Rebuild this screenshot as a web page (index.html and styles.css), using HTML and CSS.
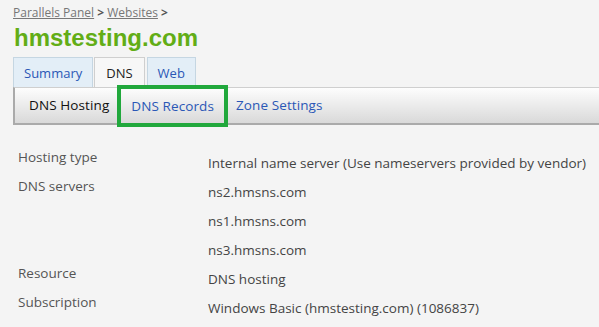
FILE: index.html
```html
<!DOCTYPE html>
<html>
<head>
    <meta charset="utf-8" />
    <title>hmstesting.com</title>
    <link rel="stylesheet" href="styles.css">
</head>
<body>
    <div class="crumbs">
        <a href="#">Parallels Panel</a> <b>&gt;</b> <a href="#">Websites</a> <b>&gt;</b>
    </div>
    <h1 class="title">hmstesting.com</h1>
    <div class="tabs">
        <a class="tab" href="#">Summary</a>
        <a class="tab active" href="#">DNS</a>
        <a class="tab" href="#">Web</a>
    </div>
    <div class="subnav">
        <a class="sub current" href="#">DNS Hosting</a>
        <a class="sub marked" href="#">DNS Records</a>
        <a class="sub" href="#">Zone Settings</a>
    </div>
    <div class="info">
        <div class="lab">Hosting type</div>
        <div class="val">Internal name server (Use nameservers provided by vendor)</div>
        <div class="lab">DNS servers</div>
        <div class="val">ns2.hmsns.com</div>
        <div class="lab"></div>
        <div class="val">ns1.hmsns.com</div>
        <div class="lab"></div>
        <div class="val">ns3.hmsns.com</div>
        <div class="lab">Resource</div>
        <div class="val">DNS hosting</div>
        <div class="lab">Subscription</div>
        <div class="val">Windows Basic (hmstesting.com) (1086837)</div>
    </div>
</body>
</html>
```

FILE: styles.css
```css
* {
    font-family: "Open Sans", "Liberation Sans", sans-serif;
}

body {
    margin: 0;
    padding: 4px 0 0 13px;
    background: #f4f4f4;
    overflow: hidden;
}

.crumbs {
    font-size: 12px;
    color: #555;
    height: 18px;
}

.crumbs a {
    color: #777;
}

.title {
    margin: 2px 0 0 1px;
    font-family: "Liberation Sans", Arial, sans-serif;
    font-size: 24px;
    font-weight: bold;
    color: #62ad16;
    height: 33px;
}

.tabs {
    display: flex;
    gap: 1px;
    height: 30px;
}

.tab {
    display: block;
    box-sizing: border-box;
    height: 30px;
    padding: 0 10px;
    line-height: 30px;
    font-size: 13px;
    color: #2a57b6;
    text-decoration: none;
    background: #e3eef7;
    border: 1px solid #c5d6e2;
    border-bottom: none;
}

.tab.active {
    color: #222;
    background: #f7f7f7;
    border-color: #cfcfcf;
    padding: 0 11px;
    margin-right: 1px;
}

.subnav {
    display: flex;
    align-items: center;
    height: 35px;
    margin-right: -10px;
    background: linear-gradient(#fdfdfd, #d9d9d9);
    border-top: 1px solid #cfcfcf;
    border-left: 2px solid #aaa;
    border-bottom: 2px solid #aaa;
}

.sub {
    font-size: 13.5px;
    letter-spacing: 0.1px;
    color: #2a57b6;
    text-decoration: none;
    padding: 0 7px 0 8px;
    line-height: 35px;
}

.sub.current {
    color: #111;
    padding: 0 8px 0 14px;
}

.sub.marked {
    box-sizing: border-box;
    height: 42px;
    line-height: 34px;
    padding: 0 10px;
    margin: 1px 0 0 0;
    border: 4px solid #21a83c;
}

.info {
    display: grid;
    grid-template-columns: 190px 1fr;
    grid-auto-rows: 29px;
    padding: 23px 0 0 5px;
    font-size: 13.5px;
}

.lab {
    color: #555;
}

.val {
    color: #444;
    padding-top: 6px;
}
```
